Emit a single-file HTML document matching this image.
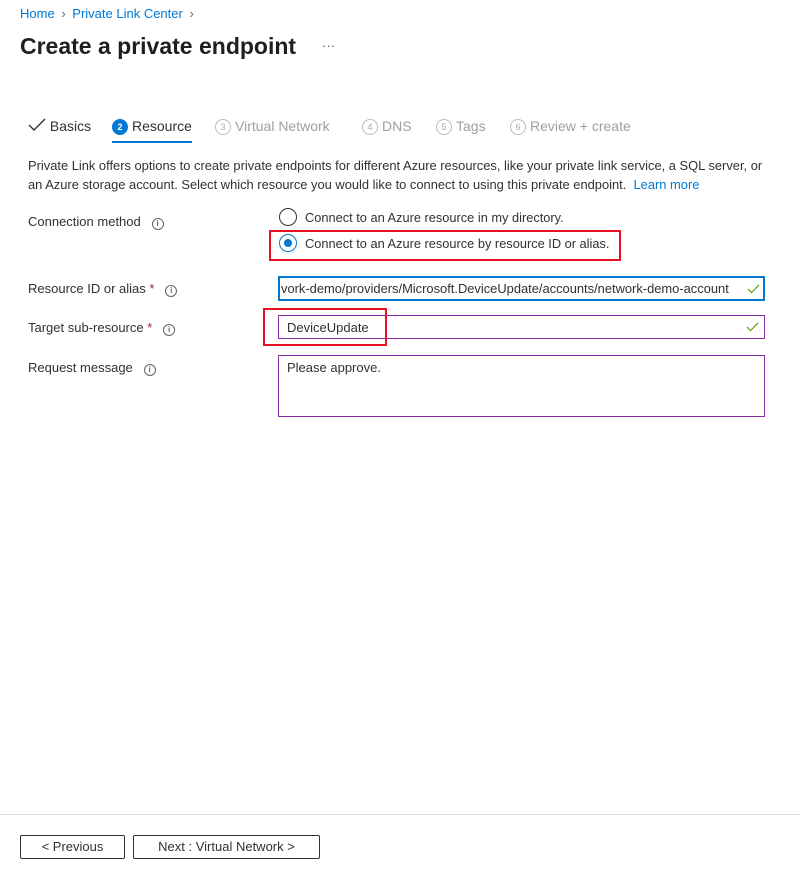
<!DOCTYPE html>
<html><head><meta charset="utf-8"><style>
*{margin:0;padding:0;box-sizing:border-box}
body{width:800px;height:874px;background:#fff;font-family:"Liberation Sans",sans-serif;color:#323130;position:relative;overflow:hidden;font-size:13px}
.a{position:absolute;white-space:nowrap}
.link{color:#0078d4}
.circ{display:inline-block;width:16px;height:16px;border-radius:50%;border:1px solid #bbb;font-size:9px;line-height:14px;text-align:center;color:#aaa;vertical-align:1px;margin-right:4px}
.info{display:inline-block;width:12px;height:12px;border-radius:50%;border:1px solid #666;font-size:8px;line-height:10px;text-align:center;color:#666;vertical-align:0px;font-weight:bold}
.box{position:absolute;border:1px solid #8a2da5}
.red{position:absolute;border:2px solid #e81123}
.btn{position:absolute;border:1px solid #323130;border-radius:2px;text-align:center;font-size:13px;line-height:22px;height:24px}
.star{color:#a4262c}
</style></head><body>
<div class="a" style="left:20px;top:6px;font-size:13px"><span class="link">Home</span> <span style="color:#666;margin:0 3px">›</span> <span class="link">Private Link Center</span> <span style="color:#666;margin-left:3px">›</span></div>
<div class="a" style="left:20px;top:33px;font-size:23px;font-weight:600;color:#201f1e">Create a private endpoint</div>
<div class="a" style="left:322px;top:38px;font-size:13px;color:#555">···</div>

<div class="a" style="left:28px;top:118px;font-size:14px"><svg width="18" height="14" style="vertical-align:-1px"><path d="M1 7 L6 12 L17 1" stroke="#323130" stroke-width="1.4" fill="none"/></svg> Basics</div>
<div class="a" style="left:112px;top:118px;font-size:14px"><span class="circ" style="background:#0078d4;border-color:#0078d4;color:#fff;font-weight:bold">2</span>Resource</div>
<div class="a" style="left:112px;top:141px;width:80px;height:2px;background:#0078d4"></div>
<div class="a" style="left:215px;top:118px;font-size:14px;color:#a19f9d"><span class="circ">3</span>Virtual Network</div>
<div class="a" style="left:362px;top:118px;font-size:14px;color:#a19f9d"><span class="circ">4</span>DNS</div>
<div class="a" style="left:436px;top:118px;font-size:14px;color:#a19f9d"><span class="circ">5</span>Tags</div>
<div class="a" style="left:510px;top:118px;font-size:14px;color:#a19f9d"><span class="circ">6</span>Review + create</div>

<div class="a" style="left:28px;top:156px;line-height:19px;font-size:12.9px">Private Link offers options to create private endpoints for different Azure resources, like your private link service, a SQL server, or<br>an Azure storage account. Select which resource you would like to connect to using this private endpoint.&nbsp;&nbsp;<span class="link">Learn more</span></div>

<div class="a" style="left:28px;top:214px">Connection method&nbsp;&nbsp; <span class="info">i</span></div>
<div class="a" style="left:279px;top:208px;width:18px;height:18px;border:1.5px solid #323130;border-radius:50%"></div>
<div class="a" style="left:305px;top:210px;font-size:12.8px">Connect to an Azure resource in my directory.</div>
<div class="a" style="left:279px;top:234px;width:18px;height:18px;border:1.5px solid #0078d4;border-radius:50%"></div>
<div class="a" style="left:284px;top:239px;width:8px;height:8px;background:#0078d4;border-radius:50%"></div>
<div class="a" style="left:305px;top:236px;font-size:12.8px">Connect to an Azure resource by resource ID or alias.</div>
<div class="red" style="left:269px;top:230px;width:352px;height:31px"></div>

<div class="a" style="left:28px;top:281px">Resource ID or alias <span class="star">*</span>&nbsp;&nbsp; <span class="info">i</span></div>
<div class="a" style="left:278px;top:276px;width:487px;height:25px;border:2px solid #0078d4;overflow:hidden"><div class="a" style="left:1px;top:3px;font-size:12.9px">vork-demo/providers/Microsoft.DeviceUpdate/accounts/network-demo-account</div><svg class="a" style="right:3px;top:6px" width="13" height="10"><path d="M1 5 L4.5 8.5 L12 1" stroke="#57a300" stroke-width="1.2" fill="none"/></svg></div>

<div class="a" style="left:28px;top:320px">Target sub-resource <span class="star">*</span>&nbsp;&nbsp; <span class="info">i</span></div>
<div class="box" style="left:278px;top:315px;width:487px;height:24px"><svg class="a" style="right:5px;top:6px" width="13" height="10"><path d="M1 5 L4.5 8.5 L12 1" stroke="#57a300" stroke-width="1.2" fill="none"/></svg></div>
<div class="a" style="left:287px;top:320px">DeviceUpdate</div>
<div class="red" style="left:263px;top:308px;width:124px;height:38px"></div>

<div class="a" style="left:28px;top:360px">Request message&nbsp;&nbsp; <span class="info">i</span></div>
<div class="box" style="left:278px;top:355px;width:487px;height:62px"></div>
<div class="a" style="left:287px;top:360px">Please approve.</div>

<div class="a" style="left:0;top:814px;width:800px;height:1px;background:#e1dfdd"></div>
<div class="btn" style="left:20px;top:835px;width:105px">&lt; Previous</div>
<div class="btn" style="left:133px;top:835px;width:187px">Next : Virtual Network &gt;</div>
</body></html>
